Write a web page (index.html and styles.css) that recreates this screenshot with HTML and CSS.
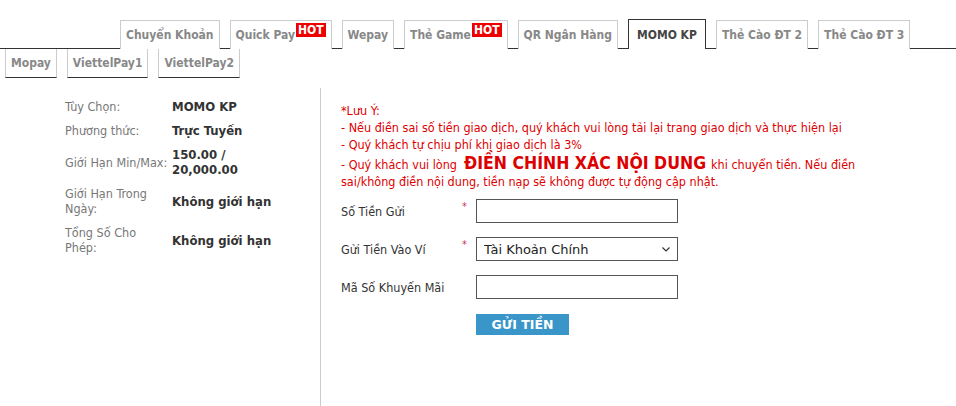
FILE: index.html
```html
<!DOCTYPE html>
<html lang="vi">
<head>
  <meta charset="UTF-8" />
  <title>Nạp tiền - MOMO KP</title>
  <link rel="stylesheet" href="styles.css">
</head>
<body>
<div class="tabs tabs-main">
  <a class="tab">Chuyển Khoản</a>
  <a class="tab">Quick Pay<span class="hot">HOT</span></a>
  <a class="tab">Wepay</a>
  <a class="tab">Thẻ Game<span class="hot">HOT</span></a>
  <a class="tab">QR Ngân Hàng</a>
  <a class="tab active">MOMO KP</a>
  <a class="tab">Thẻ Cào ĐT 2</a>
  <a class="tab">Thẻ Cào ĐT 3</a>
</div>
<div class="tabs tabs-sub">
  <a class="tab">Mopay</a>
  <a class="tab">ViettelPay1</a>
  <a class="tab">ViettelPay2</a>
</div>

<div class="content">
  <div class="info">
    <table>
      <tr><td class="lbl">Tùy Chọn:</td><td class="val">MOMO KP</td></tr>
      <tr><td class="lbl">Phương thức:</td><td class="val">Trực Tuyến</td></tr>
      <tr><td class="lbl">Giới Hạn Min/Max:</td><td class="val">150.00 / 20,000.00</td></tr>
      <tr><td class="lbl">Giới Hạn Trong Ngày:</td><td class="val">Không giới hạn</td></tr>
      <tr><td class="lbl">Tổng Số Cho Phép:</td><td class="val">Không giới hạn</td></tr>
    </table>
  </div>

  <div class="deposit">
    <div class="notes">
      *Lưu Ý:<br>
      - Nếu điền sai số tiền giao dịch, quý khách vui lòng tải lại trang giao dịch và thực hiện lại<br>
      - Quý khách tự chịu phí khi giao dịch là 3%<br>
      - Quý khách vui lòng<strong>ĐIỀN CHÍNH XÁC NỘI DUNG</strong>khi chuyển tiền. Nếu điền sai/không điền nội dung, tiền nạp sẽ không được tự động cập nhật.
    </div>

    <form class="form">
      <div class="row">
        <label>Số Tiền Gửi</label>
        <span class="req">*</span>
        <input type="text">
      </div>
      <div class="row">
        <label>Gửi Tiền Vào Ví</label>
        <span class="req">*</span>
        <span class="select-wrap">
          <select>
            <option>Tài Khoản Chính</option>
          </select>
          <svg class="chevron" width="8" height="5" viewBox="0 0 8 5"><path d="M0.5 0.5 L4 4 L7.5 0.5" fill="none" stroke="#333" stroke-width="1.2"/></svg>
        </span>
      </div>
      <div class="row">
        <label>Mã Số Khuyến Mãi</label>
        <span class="req"></span>
        <input type="text">
      </div>
      <div class="row">
        <label></label>
        <span class="req"></span>
        <button type="button" class="btn-send">GỬI TIỀN</button>
      </div>
    </form>
  </div>
</div>
</body>
</html>
```

FILE: styles.css
```css
* {
  box-sizing: border-box;
  margin: 0;
  padding: 0;
}

body {
  font-family: "DejaVu Sans", sans-serif;
  font-stretch: condensed;
  font-size: 12.5px;
  color: #333;
  background: #fff;
}

.tabs {
  display: flex;
  align-items: flex-end;
}

.tabs-main {
  padding: 20px 0 0 120px;
  border-bottom: 1px solid #333;
  height: 49px;
}

.tabs-sub {
  padding-left: 5px;
}

.tab {
  display: flex;
  align-items: center;
  white-space: nowrap;
  height: 29px;
  padding: 0 5px;
  margin-right: 10px;
  border: 1px solid #ccc;
  color: #888;
  font-weight: bold;
  font-size: 12px;
  background: #fff;
}

.tabs-main .tab {
  margin-bottom: -1px;
  border-bottom: none;
}

.tabs-sub .tab {
  border-top: none;
  border-bottom: 1px solid #333;
  height: 29px;
}

.tab.active {
  color: #444;
  border-color: #333;
  padding: 0 8px;
  height: 30px;
}

.hot {
  align-self: flex-start;
  margin: 2px 0 0 1px;
  background: #e00;
  color: #fff;
  font-size: 12px;
  line-height: 14px;
  padding: 0 2px;
}

.content {
  display: flex;
  margin-top: 10px;
}

.info {
  width: 321px;
  min-height: 318px;
  border-right: 1px solid #ccc;
  padding: 7px 0 0 61px;
}

.info table {
  border-collapse: collapse;
}

.info td {
  padding: 4px 4px 5px;
  line-height: 15px;
  vertical-align: middle;
}

.info .lbl {
  width: 107px;
  padding-right: 0;
  color: #777;
}

.info .val {
  width: 118px;
  font-weight: bold;
  font-size: 13px;
  color: #333;
}

.deposit {
  padding: 14px 0 0 20px;
}

.notes {
  color: #d00;
  line-height: 17px;
  width: 540px;
}

.notes strong {
  font-size: 17.5px;
  line-height: 20px;
  margin: 0 5px 0 7px;
}

.form {
  margin-top: 9px;
}

.row {
  display: flex;
  align-items: center;
  height: 24px;
  margin-bottom: 14px;
}

.row label {
  width: 121px;
  color: #333;
}

.req {
  width: 14px;
  align-self: flex-start;
  margin-top: 3px;
  color: #c36;
  font-size: 11px;
  line-height: 10px;
}

.row input,
.row select {
  width: 202px;
  height: 24px;
  border: 1px solid #555;
  background: #fff;
  font-family: inherit;
  font-size: 12px;
  padding: 0 4px;
}

.select-wrap {
  position: relative;
  display: flex;
}

.row select {
  appearance: none;
  -webkit-appearance: none;
  border-radius: 0;
  font-size: 13px;
  padding: 0 7px;
  color: #222;
}

.chevron {
  position: absolute;
  right: 8px;
  top: 10px;
  pointer-events: none;
}

.btn-send {
  width: 93px;
  height: 21px;
  margin-top: -2px;
  background: #3a96c8;
  color: #fff;
  border: none;
  font-family: inherit;
  font-weight: bold;
  font-size: 12.5px;
}
```
